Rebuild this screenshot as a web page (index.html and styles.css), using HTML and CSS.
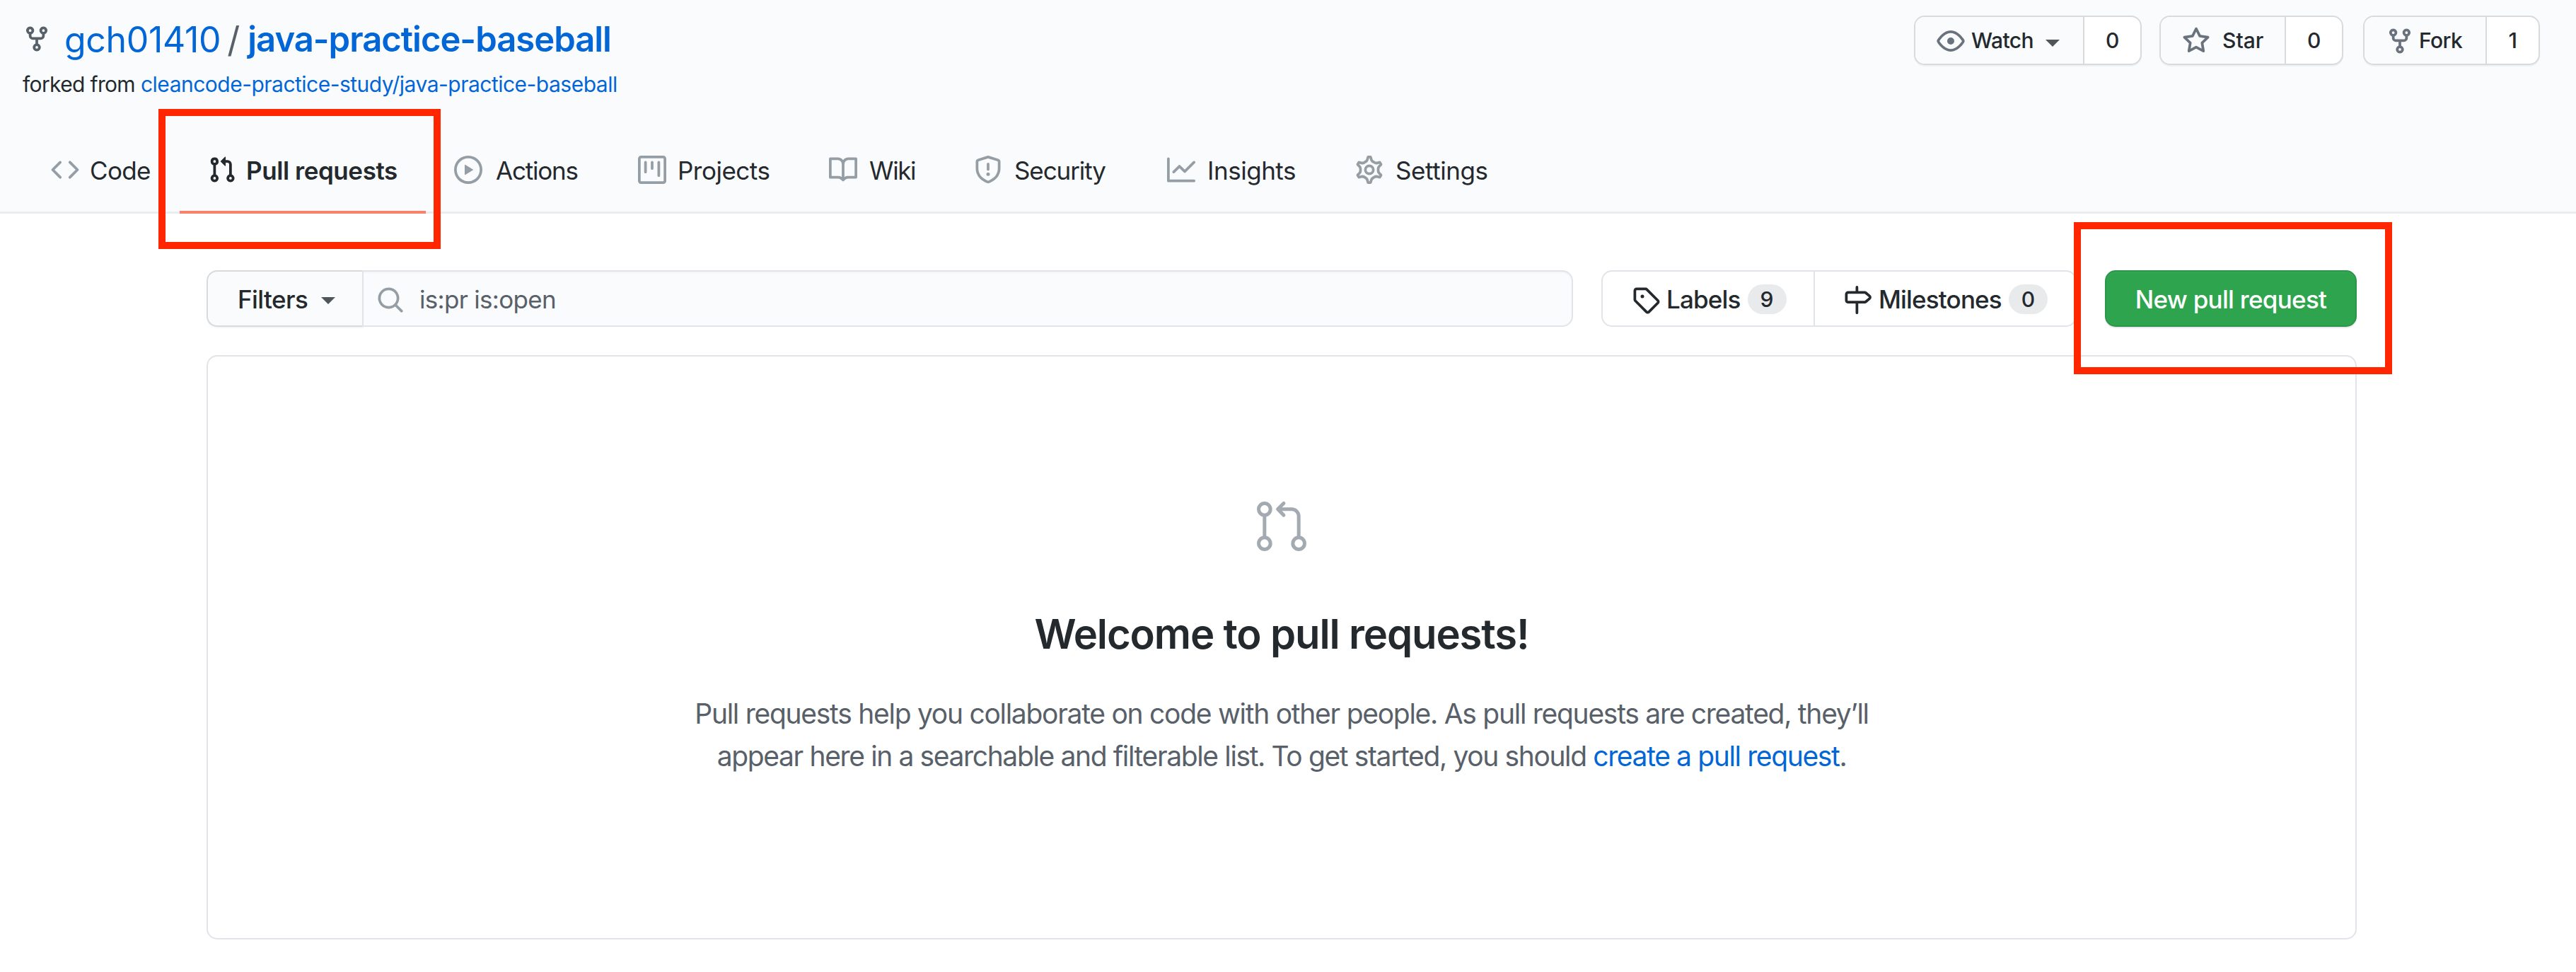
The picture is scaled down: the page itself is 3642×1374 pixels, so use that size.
FILE: index.html
```html
<!DOCTYPE html>
<html lang="en">
<head>
<meta charset="utf-8">
<title>Pull requests · gch01410/java-practice-baseball</title>
<link rel="stylesheet" href="styles.css">
</head>
<body>
<header class="repo-header">
  <div class="repo-top">
    <div>
      <h1 class="repo-title">
        <svg class="icon" viewBox="0 0 16 16"><path fill-rule="evenodd" d="M5 3.25a.75.75 0 11-1.5 0 .75.75 0 011.5 0zm0 2.122a2.25 2.25 0 10-1.5 0v.878A2.25 2.25 0 005.75 8.5h1.5v2.128a2.251 2.251 0 101.5 0V8.5h1.5a2.25 2.25 0 002.25-2.25v-.878a2.25 2.25 0 10-1.5 0v.878a.75.75 0 01-.75.75h-4.5A.75.75 0 015 6.25v-.878zm3.75 7.378a.75.75 0 11-1.5 0 .75.75 0 011.5 0zm3-8.75a.75.75 0 100-1.5.75.75 0 000 1.5z"/></svg>
        <a class="owner" href="#">gch01410</a>
        <span class="slash">/</span>
        <a class="name" href="#">java-practice-baseball</a>
      </h1>
      <div class="forked"><span class="forked-label">forked from</span><a href="#">cleancode-practice-study/java-practice-baseball</a></div>
    </div>
    <div class="actions">
      <div class="action watch">
        <button class="action-main"><svg class="icon" viewBox="0 0 16 16"><path fill-rule="evenodd" d="M1.679 7.932c.412-.621 1.242-1.75 2.366-2.717C5.175 4.242 6.527 3.5 8 3.5c1.473 0 2.824.742 3.955 1.715 1.124.967 1.954 2.096 2.366 2.717a.119.119 0 010 .136c-.412.621-1.242 1.75-2.366 2.717C10.825 11.758 9.473 12.5 8 12.5c-1.473 0-2.824-.742-3.955-1.715C2.92 9.818 2.09 8.69 1.679 8.068a.119.119 0 010-.136zM8 2c-1.981 0-3.67.992-4.933 2.078C1.797 5.169.88 6.423.43 7.1a1.619 1.619 0 000 1.798c.45.678 1.367 1.932 2.637 3.024C4.329 13.008 6.019 14 8 14c1.981 0 3.67-.992 4.933-2.078 1.27-1.091 2.187-2.345 2.637-3.023a1.619 1.619 0 000-1.798c-.45-.678-1.367-1.932-2.637-3.023C11.671 2.992 9.981 2 8 2zm0 8a2 2 0 100-4 2 2 0 000 4z"/></svg><span>Watch</span><i class="caret"></i></button>
        <a class="action-count">0</a>
      </div>
      <div class="action star">
        <button class="action-main"><svg class="icon" viewBox="0 0 16 16"><path fill-rule="evenodd" d="M8 .25a.75.75 0 01.673.418l1.882 3.815 4.21.612a.75.75 0 01.416 1.279l-3.046 2.97.719 4.192a.75.75 0 01-1.088.791L8 12.347l-3.766 1.98a.75.75 0 01-1.088-.79l.72-4.194L.818 6.374a.75.75 0 01.416-1.28l4.21-.611L7.327.668A.75.75 0 018 .25zm0 2.445L6.615 5.5a.75.75 0 01-.564.41l-3.097.45 2.24 2.184a.75.75 0 01.216.664l-.528 3.084 2.769-1.456a.75.75 0 01.698 0l2.77 1.456-.53-3.084a.75.75 0 01.216-.664l2.24-2.183-3.096-.45a.75.75 0 01-.564-.41L8 2.694v.001z"/></svg><span>Star</span></button>
        <a class="action-count">0</a>
      </div>
      <div class="action fork">
        <button class="action-main"><svg class="icon" viewBox="0 0 16 16"><path fill-rule="evenodd" d="M5 3.25a.75.75 0 11-1.5 0 .75.75 0 011.5 0zm0 2.122a2.25 2.25 0 10-1.5 0v.878A2.25 2.25 0 005.75 8.5h1.5v2.128a2.251 2.251 0 101.5 0V8.5h1.5a2.25 2.25 0 002.25-2.25v-.878a2.25 2.25 0 10-1.5 0v.878a.75.75 0 01-.75.75h-4.5A.75.75 0 015 6.25v-.878zm3.75 7.378a.75.75 0 11-1.5 0 .75.75 0 011.5 0zm3-8.75a.75.75 0 100-1.5.75.75 0 000 1.5z"/></svg><span>Fork</span></button>
        <a class="action-count">1</a>
      </div>
    </div>
  </div>
  <nav class="tabs">
    <a class="tab code"><svg class="icon" viewBox="0 0 16 16"><path fill-rule="evenodd" d="M4.72 3.22a.75.75 0 011.06 1.06L2.06 8l3.72 3.72a.75.75 0 11-1.06 1.06L.47 8.53a.75.75 0 010-1.06l4.25-4.25zm6.56 0a.75.75 0 10-1.06 1.06L13.94 8l-3.72 3.72a.75.75 0 101.06 1.06l4.25-4.25a.75.75 0 000-1.06l-4.25-4.25z"/></svg><span>Code</span></a>
    <a class="tab pulls selected"><svg class="icon" viewBox="0 0 16 16"><path fill-rule="evenodd" d="M7.177 3.073L9.573.677A.25.25 0 0110 .854v4.792a.25.25 0 01-.427.177L7.177 3.427a.25.25 0 010-.354zM3.75 2.5a.75.75 0 100 1.5.75.75 0 000-1.5zm-2.25.75a2.25 2.25 0 113 2.122v5.256a2.251 2.251 0 11-1.5 0V5.372A2.25 2.25 0 011.5 3.25zM11 2.5h-1V4h1a1 1 0 011 1v5.628a2.251 2.251 0 101.5 0V5A2.5 2.5 0 0011 2.5zm1 10.25a.75.75 0 111.5 0 .75.75 0 01-1.5 0zM3.75 12a.75.75 0 100 1.5.75.75 0 000-1.5z"/></svg><span>Pull requests</span></a>
    <a class="tab runs"><svg class="icon" viewBox="0 0 16 16"><path fill-rule="evenodd" d="M1.5 8a6.5 6.5 0 1113 0 6.5 6.5 0 01-13 0zM8 0a8 8 0 100 16A8 8 0 008 0zM6.379 5.227A.25.25 0 006 5.442v5.117a.25.25 0 00.379.214l4.264-2.559a.25.25 0 000-.428L6.379 5.227z"/></svg><span>Actions</span></a>
    <a class="tab projects"><svg class="icon" viewBox="0 0 16 16"><path fill-rule="evenodd" d="M1.75 0A1.75 1.75 0 000 1.75v12.5C0 15.216.784 16 1.75 16h12.5A1.75 1.75 0 0016 14.25V1.75A1.75 1.75 0 0014.25 0H1.75zM1.5 1.75a.25.25 0 01.25-.25h12.5a.25.25 0 01.25.25v12.5a.25.25 0 01-.25.25H1.75a.25.25 0 01-.25-.25V1.75zM11.75 3a.75.75 0 00-.75.75v7.5a.75.75 0 001.5 0v-7.5a.75.75 0 00-.75-.75zm-8.25.75a.75.75 0 011.5 0v5.5a.75.75 0 01-1.5 0v-5.5zM8 3a.75.75 0 00-.75.75v3.5a.75.75 0 001.5 0v-3.5A.75.75 0 008 3z"/></svg><span>Projects</span></a>
    <a class="tab wiki"><svg class="icon" viewBox="0 0 16 16"><path fill-rule="evenodd" d="M0 1.75A.75.75 0 01.75 1h4.253c1.227 0 2.317.59 3 1.501A3.744 3.744 0 0111.006 1h4.245a.75.75 0 01.75.75v10.5a.75.75 0 01-.75.75h-4.507a2.25 2.25 0 00-1.591.659l-.622.621a.75.75 0 01-1.06 0l-.622-.621A2.25 2.25 0 005.258 13H.75a.75.75 0 01-.75-.75V1.75zm8.755 3a2.25 2.25 0 012.25-2.25H14.5v9h-3.757c-.71 0-1.4.201-1.992.572l.004-7.322zm-1.504 7.324l.004-5.073-.002-2.253A2.25 2.25 0 005.003 2.5H1.5v9h3.757a3.75 3.75 0 011.994.574z"/></svg><span>Wiki</span></a>
    <a class="tab security"><svg class="icon" viewBox="0 0 16 16"><path fill-rule="evenodd" d="M7.467.133a1.75 1.75 0 011.066 0l5.25 1.68A1.75 1.75 0 0115 3.48V7c0 1.566-.32 3.182-1.303 4.682-.983 1.498-2.585 2.813-5.032 3.855a1.7 1.7 0 01-1.33 0c-2.447-1.042-4.049-2.357-5.032-3.855C1.32 10.182 1 8.566 1 7V3.48a1.75 1.75 0 011.217-1.667l5.25-1.68zm.61 1.429a.25.25 0 00-.153 0l-5.25 1.68a.25.25 0 00-.174.238V7c0 1.358.275 2.666 1.057 3.86.784 1.194 2.121 2.34 4.366 3.297a.2.2 0 00.154 0c2.245-.956 3.582-2.104 4.366-3.298C13.225 9.666 13.5 8.36 13.5 7V3.48a.25.25 0 00-.174-.237l-5.25-1.68zM9 10.5a1 1 0 11-2 0 1 1 0 012 0zm-.25-5.75a.75.75 0 10-1.5 0v3a.75.75 0 001.5 0v-3z"/></svg><span>Security</span></a>
    <a class="tab insights"><svg class="icon" viewBox="0 0 16 16"><path fill-rule="evenodd" d="M1.5 1.75a.75.75 0 00-1.5 0v12.5c0 .414.336.75.75.75h14.5a.75.75 0 000-1.5H1.5V1.75zm14.28 2.53a.75.75 0 00-1.06-1.06L10 7.94 7.53 5.47a.75.75 0 00-1.06 0L3.22 8.72a.75.75 0 001.06 1.06L7 7.06l2.47 2.47a.75.75 0 001.06 0l5.25-5.25z"/></svg><span>Insights</span></a>
    <a class="tab settings"><svg class="icon outline" viewBox="0 0 16 16"><path stroke-width="1.35" transform="translate(8 8) scale(1.115) translate(-8 -8)" d="M7.429 1.525a6.593 6.593 0 011.142 0c.036.003.108.036.137.146l.289 1.105c.147.56.55.967.997 1.189.174.086.341.183.501.29.417.278.97.423 1.53.27l1.102-.303c.11-.03.175.016.195.046.219.31.41.641.573.989.014.031.022.11-.059.19l-.815.806c-.411.406-.562.957-.53 1.456a4.588 4.588 0 010 .582c-.032.499.119 1.05.53 1.456l.815.806c.08.08.073.159.059.19a6.494 6.494 0 01-.573.99c-.02.029-.086.074-.195.045l-1.103-.303c-.559-.153-1.112-.008-1.529.27-.16.107-.327.204-.5.29-.449.222-.851.628-.998 1.189l-.289 1.105c-.029.11-.101.143-.137.146a6.613 6.613 0 01-1.142 0c-.036-.003-.108-.037-.137-.146l-.289-1.105c-.147-.56-.55-.967-.997-1.189a4.502 4.502 0 01-.501-.29c-.417-.278-.97-.423-1.53-.27l-1.102.303c-.11.03-.175-.016-.195-.046a6.492 6.492 0 01-.573-.989c-.014-.031-.022-.11.059-.19l.815-.806c.411-.406.562-.957.53-1.456a4.587 4.587 0 010-.582c.032-.499-.119-1.05-.53-1.456l-.815-.806c-.08-.08-.073-.159-.059-.19a6.44 6.44 0 01.573-.99c.02-.029.086-.075.195-.045l1.103.303c.559.153 1.112.008 1.529-.27.16-.107.327-.204.5-.29.449-.222.851-.628.998-1.189l.289-1.105c.029-.11.101-.143.137-.146z"/><circle cx="8" cy="8" r="2.25" stroke-width="1.5"/></svg><span>Settings</span></a>
  </nav>
</header>

<main class="content">
  <div class="toolbar">
    <div class="search-group">
      <button class="filters"><span>Filters</span><i class="caret"></i></button>
      <div class="search">
        <svg class="icon" viewBox="0 0 16 16"><path fill-rule="evenodd" d="M11.5 7a4.499 4.499 0 11-8.998 0A4.499 4.499 0 0111.5 7zm-.82 4.74a6 6 0 111.06-1.06l3.04 3.04a.75.75 0 11-1.06 1.06l-3.04-3.04z"/></svg>
        <span>is:pr is:open</span>
      </div>
    </div>
    <div class="subnav">
      <a class="subnav-item labels"><svg class="icon" viewBox="0 0 16 16"><path fill-rule="evenodd" d="M2.5 7.775V2.75a.25.25 0 01.25-.25h5.025a.25.25 0 01.177.073l6.25 6.25a.25.25 0 010 .354l-5.025 5.025a.25.25 0 01-.354 0l-6.25-6.25a.25.25 0 01-.073-.177zm-1.5 0V2.75C1 1.784 1.784 1 2.75 1h5.025c.464 0 .91.184 1.238.513l6.25 6.25a1.75 1.75 0 010 2.474l-5.026 5.026a1.75 1.75 0 01-2.474 0l-6.25-6.25A1.75 1.75 0 011 7.775zM6 5a1 1 0 100 2 1 1 0 000-2z"/></svg><span class="subnav-text">Labels</span><span class="badge">9</span></a>
      <a class="subnav-item milestones"><svg class="icon" viewBox="0 0 16 16"><path fill-rule="evenodd" d="M7.75 0a.75.75 0 01.75.75V3h3.634c.414 0 .814.147 1.13.414l2.07 1.75a1.75 1.75 0 010 2.672l-2.07 1.75a1.75 1.75 0 01-1.13.414H8.5v5.25a.75.75 0 11-1.5 0V10H2.75A1.75 1.75 0 011 8.25v-3.5C1 3.784 1.784 3 2.75 3H7V.75A.75.75 0 017.75 0zm0 8.5h4.384a.25.25 0 00.161-.06l2.07-1.75a.25.25 0 000-.38l-2.07-1.75a.25.25 0 00-.161-.06H2.75a.25.25 0 00-.25.25v3.5c0 .138.112.25.25.25h5z"/></svg><span class="subnav-text">Milestones</span><span class="badge">0</span></a>
    </div>
    <button class="new-pr"><span>New pull request</span></button>
  </div>

  <section class="blank">
    <svg class="blank-icon outline" viewBox="0 0 24 24" stroke-width="1.5" stroke-linecap="round" stroke-linejoin="round"><circle cx="4.75" cy="4.75" r="2.5"/><circle cx="4.75" cy="19.25" r="2.5"/><circle cx="19.25" cy="19.25" r="2.5"/><path d="M4.75 8v8M12.875 2.25l-2.5 2.5 2.5 2.5M10.6 4.75h5.65a3 3 0 013 3v8.5"/></svg>
    <h2>Welcome to pull requests!</h2>
    <p><span class="line-one">Pull requests help you collaborate on code with other people. As pull requests are created, they’ll</span><br>appear here in a searchable and filterable list. To get started, you should <a href="#">create a pull request</a>.</p>
  </section>
</main>

<div class="marker marker-tab"></div>
<div class="marker marker-button"></div>
</body>
</html>
```
FILE: styles.css
```css
* { box-sizing: border-box; }

body {
  margin: 0;
  position: relative;
  min-height: 1374px;
  background: #fff;
  color: #24292e;
  font-family: Inter, "Liberation Sans", sans-serif;
  font-size: 35px;
}

a { color: #0366d6; text-decoration: none; }
button { font: inherit; color: inherit; margin: 0; padding: 0; border: 0; background: none; }
.icon { flex: none; display: block; width: 40px; height: 40px; fill: currentColor; }
.outline { fill: none; stroke: currentColor; }

.caret {
  flex: none;
  border: 10px solid transparent;
  border-top-color: #50555a;
  border-bottom: 0;
}

/* Repository header */
.repo-header { background: #fafbfc; border-bottom: 3px solid #eaecef; }
.repo-top { display: flex; justify-content: space-between; padding: 21px 51px 0 32px; }

.repo-title {
  display: flex;
  align-items: center;
  margin: 0;
  height: 70px;
  font-size: 50px;
  font-weight: 400;
  line-height: 70px;
}
.repo-title .icon { margin: 0 19px 3px 0; color: #586069; }
.owner { letter-spacing: -0.33px; }
.slash { margin: 0 11px 0 9px; color: #586069; }
.name { font-size: 49px; font-weight: 600; letter-spacing: -1.02px; }

.forked { display: flex; gap: 8px; margin-top: 8px; font-size: 30px; line-height: 40px; letter-spacing: -0.51px; }
.forked-label { letter-spacing: -0.66px; }

.actions { display: flex; padding-top: 1px; font-size: 30px; font-weight: 500; letter-spacing: -0.56px; }
.action {
  display: flex;
  height: 70px;
  border: 2px solid #d8dadc;
  border-radius: 15px;
  background: #fff;
  overflow: hidden;
  box-shadow: 0 2px 1px rgba(27, 31, 35, 0.05);
}
.action-main {
  display: flex;
  align-items: center;
  padding-left: 30px;
  border-right: 2px solid #d8dadc;
  background: #fafbfc;
  letter-spacing: inherit;
}
.action-main .icon { margin-top: 2px; color: #6a737d; }
.action-count { flex: 1; display: flex; align-items: center; justify-content: center; color: #24292e; }
.watch { width: 322px; margin-right: 25px; }
.watch .action-main { width: 239px; }
.watch .icon { margin-right: 9px; }
.watch .caret { margin: 8px 0 0 17px; }
.star { width: 260px; margin-right: 28px; }
.star .action-main { width: 177px; }
.star .icon { margin-right: 17px; }
.star span { letter-spacing: 0; }
.fork { width: 250px; }
.fork .action-main { width: 173px; }
.fork .icon { margin-right: 7px; }

/* Tabs sit on top of the header's bottom border */
.tabs { display: flex; margin: 41px 0 -3px; padding-left: 32px; }
.tab {
  display: flex;
  align-items: center;
  flex: none;
  height: 122px;
  padding: 2px 0 0 40px;
  border-bottom: 4px solid transparent;
  color: #24292e;
}
.tab .icon { margin-right: 17px; color: #959da5; }
.tab span { padding-top: 2px; }
.tab.selected { border-bottom-color: #f9826c; font-weight: 600; }
.tab.selected .icon { color: #24292e; }
.code { width: 222px; letter-spacing: -0.66px; }
.code .icon { margin-right: 15px; }
.pulls { width: 348px; letter-spacing: -0.43px; }
.pulls .icon { margin-right: 14px; }
.runs { width: 260px; letter-spacing: -1.2px; }
.runs .icon { margin-right: 19px; }
.projects { width: 270px; letter-spacing: -0.49px; }
.projects .icon { margin-right: 16px; }
.wiki { width: 205px; letter-spacing: -1.35px; }
.security { width: 273px; letter-spacing: -1.1px; }
.insights { width: 266px; letter-spacing: -0.47px; }
.settings { letter-spacing: -0.43px; }

/* Toolbar */
.content { width: 3040px; margin-left: 292px; padding-top: 80px; }
.toolbar { display: flex; gap: 40px; height: 80px; font-weight: 500; }
.search-group { display: flex; width: 1932px; }
.filters {
  display: flex;
  align-items: center;
  width: 222px;
  padding-left: 42px;
  border: 2px solid #d8dadc;
  border-right-color: #e1e4e8;
  border-radius: 15px 0 0 15px;
  background: #fafbfc;
  box-shadow: 0 2px 1px rgba(27, 31, 35, 0.04);
  letter-spacing: -0.57px;
}
.filters span { padding-top: 2px; }
.filters .caret { margin: 6px 0 0 19px; }
.search {
  flex: 1;
  display: flex;
  align-items: center;
  gap: 21px;
  padding-left: 18px;
  border: 2px solid #e1e4e8;
  border-left: 0;
  border-radius: 0 15px 15px 0;
  background: #fafbfc;
  box-shadow: inset 0 2px 1px rgba(225, 228, 232, 0.3);
  color: #586069;
  font-weight: 400;
  letter-spacing: -0.7px;
}
.search .icon { margin-top: 3px; color: #959da5; }
.search span { padding-top: 2px; }

.subnav { display: flex; width: 672px; border: 2px solid #e1e4e8; border-radius: 15px; letter-spacing: -0.83px; }
.subnav-item { display: flex; align-items: center; color: #24292e; }
.subnav-item .icon { margin-top: 3px; }
.subnav-text { padding-top: 2px; }
.labels { width: 300px; padding-left: 41px; border-right: 2px solid #e1e4e8; }
.labels .subnav-text { margin: 0 10px 0 9px; }
.milestones { padding-left: 40px; }
.milestones .subnav-text { margin: 0 10px; }
.badge {
  width: 55px;
  height: 42px;
  margin-top: 2px;
  border-radius: 21px;
  background: #e8eaec;
  font-size: 30px;
  line-height: 42px;
  letter-spacing: 0;
  text-align: center;
}

.new-pr {
  width: 356px;
  border: 2px solid #2c974b;
  border-radius: 15px;
  background: #2ea44f;
  box-shadow: 0 2px 1px rgba(27, 31, 35, 0.1), inset 0 2px 0 rgba(255, 255, 255, 0.03);
  color: #fff;
  letter-spacing: -0.71px;
}
.new-pr span { display: block; padding-top: 2px; }

/* Empty state */
.blank {
  display: flex;
  flex-direction: column;
  align-items: center;
  height: 826px;
  margin-top: 40px;
  padding-top: 200px;
  border: 2px solid #e1e4e8;
  border-radius: 15px;
}
.blank-icon { width: 80px; height: 80px; color: #a3aab1; }
.blank h2 { margin: 67px 0 0; font-size: 58px; font-weight: 600; line-height: 90px; letter-spacing: -1.12px; }
.blank p { margin: 38px 0 0; color: #586069; font-size: 39px; line-height: 60px; letter-spacing: -1.37px; text-align: center; white-space: nowrap; }
.line-one { letter-spacing: -1.275px; }

/* Highlight frames over the page */
.marker { position: absolute; border: 10px solid #ff2600; }
.marker-tab { left: 224px; top: 154px; width: 399px; height: 198px; }
.marker-button { left: 2932px; top: 314px; width: 450px; height: 215px; }
```
